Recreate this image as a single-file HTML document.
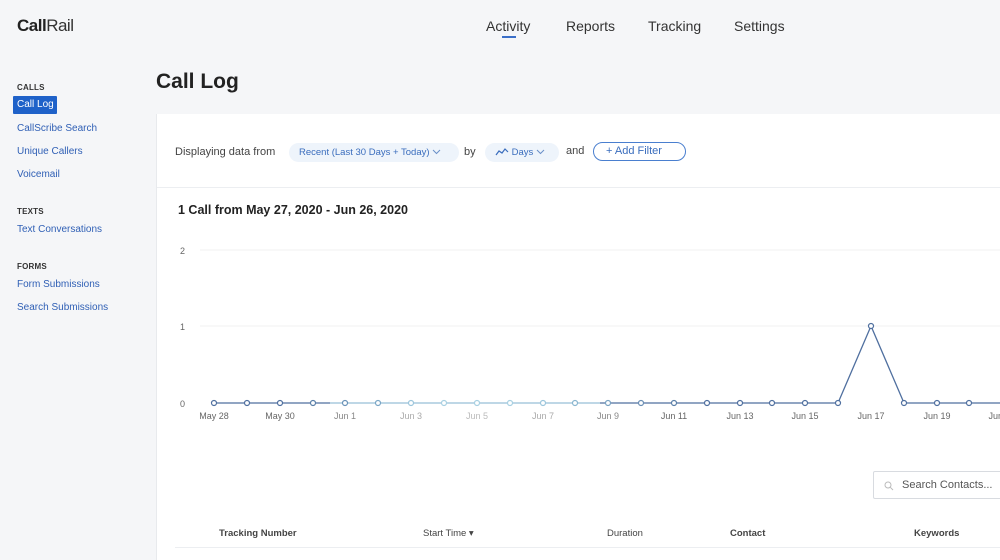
<!DOCTYPE html>
<html><head><meta charset="utf-8"><style>
*{margin:0;padding:0;box-sizing:border-box}
body{width:1000px;height:560px;overflow:hidden;background:#f5f6f8;font-family:"Liberation Sans",sans-serif;position:relative;color:#333}
.logo{position:absolute;left:17px;top:16px;font-size:17px;color:#222;letter-spacing:-0.5px}
.logo b{font-weight:700}
.logo span{font-weight:400;color:#333}
.nav{position:absolute;top:18px;font-size:14px;color:#333}
.uline{position:absolute;left:502px;top:36px;width:14px;height:2px;background:#3b6fc8}
.side{position:absolute;left:17px;font-size:10px}
.sh{font-weight:700;font-size:8px;color:#333;letter-spacing:.2px}
.sl{color:#2f5fb5}
.active{position:absolute;left:13px;top:96px;width:44px;height:18px;background:#1f62c9;color:#fff;font-size:10px;padding:3px 0 0 4px;border-radius:1px}
h1{position:absolute;left:156px;top:70px;font-size:21px;font-weight:700;color:#222}
.panel{position:absolute;left:156px;top:114px;width:844px;height:446px;background:#fff;border-left:1px solid #e8eaed}
.sep{position:absolute;left:0;right:0;top:73px;height:1px;background:#eceef1}
.t{position:absolute;font-size:11px;color:#444}
.pill{position:absolute;top:29px;height:19px;line-height:19px;background:#eef4fb;border-radius:10px;color:#3a6dbd;font-size:9.5px;padding:0 10px;white-space:nowrap}
.pill svg{vertical-align:middle}
.af{position:absolute;left:436px;top:28px;width:93px;height:19px;line-height:17px;border:1px solid #4a7fcf;border-radius:10px;color:#3a6dbd;font-size:11px;padding:0 0 0 12px}
.search{position:absolute;left:716px;top:357px;width:140px;height:28px;border:1px solid #d8dbe0;border-radius:2px;font-size:11px;color:#555;padding:7px 0 0 28px}
.th{position:absolute;top:414px;font-size:9.5px;color:#444}
</style></head><body>
<div class="logo"><b>Call</b><span>Rail</span></div>
<div class="nav" style="left:486px">Activity</div>
<div class="nav" style="left:566px">Reports</div>
<div class="nav" style="left:648px">Tracking</div>
<div class="nav" style="left:734px">Settings</div>
<div class="uline"></div>
<div class="side sh" style="top:83px">CALLS</div>
<div class="active">Call Log</div>
<div class="side sl" style="top:123px">CallScribe Search</div>
<div class="side sl" style="top:146px">Unique Callers</div>
<div class="side sl" style="top:169px">Voicemail</div>
<div class="side sh" style="top:207px">TEXTS</div>
<div class="side sl" style="top:224px">Text Conversations</div>
<div class="side sh" style="top:262px">FORMS</div>
<div class="side sl" style="top:279px">Form Submissions</div>
<div class="side sl" style="top:302px">Search Submissions</div>
<h1>Call Log</h1>
<div class="panel">
<div class="t" style="left:18px;top:32px">Displaying data from</div>
<div class="pill" style="left:132px;width:170px">Recent (Last 30 Days + Today) <svg width="9" height="6" viewBox="0 0 9 6"><path d="M1 1l3.5 3.5L8 1" fill="none" stroke="#6a8fc8" stroke-width="1"/></svg></div>
<div class="t" style="left:307px;top:32px">by</div>
<div class="pill" style="left:328px;width:74px"><svg width="14" height="8" viewBox="0 0 14 8"><path d="M1 7l3-4 3 2 3-4 3 3" fill="none" stroke="#3a6dbd" stroke-width="1.2"/></svg> Days <svg width="9" height="6" viewBox="0 0 9 6"><path d="M1 1l3.5 3.5L8 1" fill="none" stroke="#6a8fc8" stroke-width="1"/></svg></div>
<div class="t" style="left:409px;top:31px">and</div>
<div class="af">+ Add Filter</div>
<div class="sep"></div>
<div style="position:absolute;left:21px;top:89px;font-size:12.5px;font-weight:700;color:#222">1 Call from May 27, 2020 - Jun 26, 2020</div>
<div class="search"><svg style="position:absolute;left:10px;top:9px" width="10" height="10" viewBox="0 0 10 10"><circle cx="4" cy="4" r="3" fill="none" stroke="#bbb"/><path d="M6.3 6.3L9 9" stroke="#bbb"/></svg>Search Contacts...</div>
<div class="th" style="left:62px;font-weight:700">Tracking Number</div>
<div class="th" style="left:266px">Start Time ▾</div>
<div class="th" style="left:450px">Duration</div>
<div class="th" style="left:573px;font-weight:700">Contact</div>
<div class="th" style="left:757px;font-weight:700">Keywords</div>
<div style="position:absolute;left:18px;right:0;top:433px;height:1px;background:#eceef1"></div>
</div>
<svg style="position:absolute;left:0;top:0" width="1000" height="560" font-family="Liberation Sans" font-size="9">
<text x="180" y="254" fill="#666">2</text>
<text x="180" y="330" fill="#666">1</text>
<text x="180" y="407" fill="#666">0</text>
<line x1="200" y1="250" x2="1000" y2="250" stroke="#f0f0f0"/>
<line x1="200" y1="326" x2="1000" y2="326" stroke="#f0f0f0"/>
<polyline fill="none" stroke="#4f6f9f" stroke-width="1.3" points="214,403 838,403 871,326 904,403 1002,403"/>
<line x1="330" y1="403" x2="600" y2="403" stroke="#b8d6e6" stroke-width="1.5"/>
<g fill="#fff" stroke-width="1.2">
<circle cx="214" cy="403" r="2.5" stroke="#4f6f9f"/><circle cx="247" cy="403" r="2.5" stroke="#4f6f9f"/><circle cx="280" cy="403" r="2.5" stroke="#4f6f9f"/><circle cx="313" cy="403" r="2.5" stroke="#5a7fa8"/><circle cx="345" cy="403" r="2.5" stroke="#6a93b8"/><circle cx="378" cy="403" r="2.5" stroke="#7aa6c6"/><circle cx="411" cy="403" r="2.5" stroke="#9cc6dc"/><circle cx="444" cy="403" r="2.5" stroke="#a8d0e2"/><circle cx="477" cy="403" r="2.5" stroke="#a8d0e2"/><circle cx="510" cy="403" r="2.5" stroke="#a8d0e2"/><circle cx="543" cy="403" r="2.5" stroke="#9cc6dc"/><circle cx="575" cy="403" r="2.5" stroke="#8ab6d0"/><circle cx="608" cy="403" r="2.5" stroke="#7aa2c2"/><circle cx="641" cy="403" r="2.5" stroke="#6a8eb4"/><circle cx="674" cy="403" r="2.5" stroke="#5a7fa8"/><circle cx="707" cy="403" r="2.5" stroke="#4f6f9f"/><circle cx="740" cy="403" r="2.5" stroke="#4f6f9f"/><circle cx="772" cy="403" r="2.5" stroke="#4f6f9f"/><circle cx="805" cy="403" r="2.5" stroke="#4f6f9f"/><circle cx="838" cy="403" r="2.5" stroke="#4f6f9f"/><circle cx="871" cy="326" r="2.5" stroke="#4f6f9f"/><circle cx="904" cy="403" r="2.5" stroke="#4f6f9f"/><circle cx="937" cy="403" r="2.5" stroke="#4f6f9f"/><circle cx="969" cy="403" r="2.5" stroke="#4f6f9f"/>
</g>
<g text-anchor="middle">
<text x="214" y="419" fill="#666">May 28</text><text x="280" y="419" fill="#666">May 30</text><text x="345" y="419" fill="#888">Jun 1</text><text x="411" y="419" fill="#aaa">Jun 3</text><text x="477" y="419" fill="#bbb">Jun 5</text><text x="543" y="419" fill="#aaa">Jun 7</text><text x="608" y="419" fill="#888">Jun 9</text><text x="674" y="419" fill="#666">Jun 11</text><text x="740" y="419" fill="#666">Jun 13</text><text x="805" y="419" fill="#666">Jun 15</text><text x="871" y="419" fill="#666">Jun 17</text><text x="937" y="419" fill="#666">Jun 19</text><text x="1002" y="419" fill="#666">Jun 21</text>
</g>
</svg>
</body></html>
